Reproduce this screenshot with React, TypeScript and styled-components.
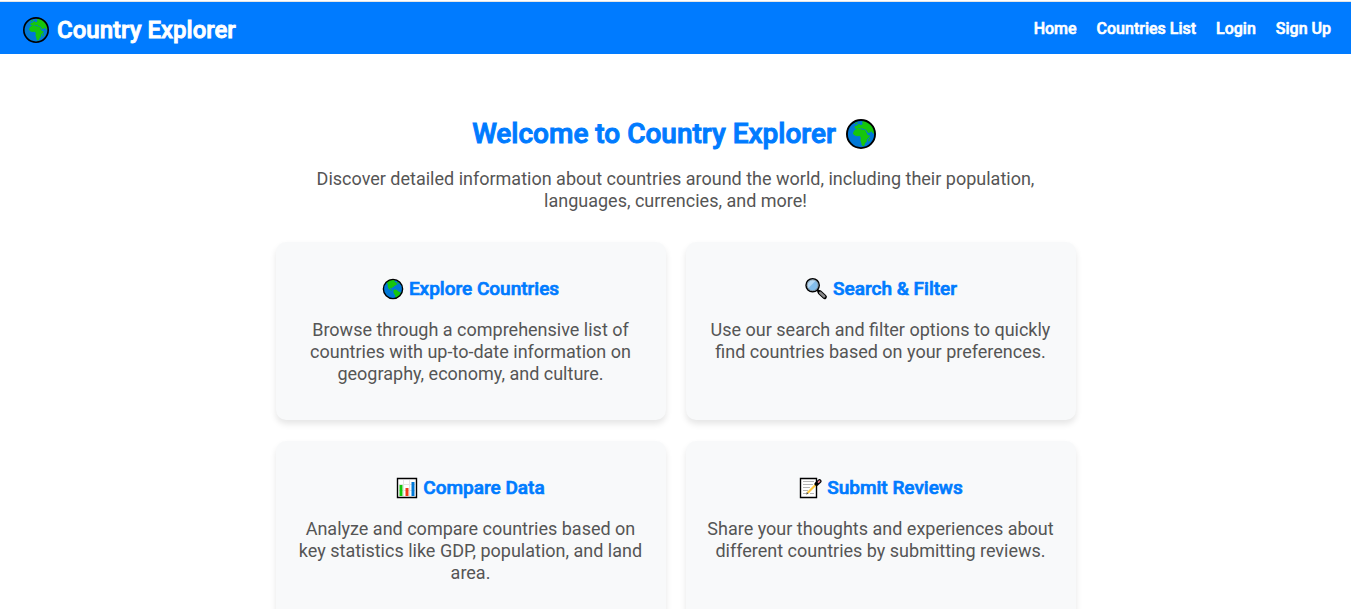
import React from "react";
import styled, { createGlobalStyle, css } from "styled-components";

const GlobalStyle = createGlobalStyle`
  *, *::before, *::after { box-sizing: border-box; }
  body {
    margin: 0;
    background: #fff;
    color: #555;
    font-family: Roboto, "Liberation Sans", sans-serif;
  }
  h1, h2, h3, p, ul { margin: 0; padding: 0; }
`;

const strong = css`
  font-weight: 500;
  -webkit-text-stroke: 0.035em currentColor;
`;

const Page = styled.div`
  padding: 1px 1px 0 0;
`;

const Header = styled.header`
  display: flex;
  align-items: center;
  justify-content: space-between;
  min-height: 53px;
  padding: 2px 20px 0;
  border-top: 1px solid #e4e4e4;
  background: #007bff;
  color: #fff;
`;

const Brand = styled.h1`
  display: flex;
  align-items: center;
  gap: 8px;
  padding: 2px 0 0 3px;
  font-size: 24px;
  line-height: 28px;
  ${strong}
`;

const NavList = styled.ul`
  display: flex;
  gap: 20px;
  list-style: none;
`;

const NavLink = styled.a`
  color: #fff;
  font-size: 16px;
  line-height: 20px;
  text-decoration: none;
  ${strong}
`;

const Main = styled.main`
  max-width: 840px;
  margin: 0 auto;
  padding: 63px 20px 40px;
  text-align: center;
`;

const Heading = styled.h2`
  display: flex;
  align-items: center;
  justify-content: center;
  gap: 10px;
  padding-right: 3px;
  color: #007bff;
  font-size: 28px;
  line-height: 34px;
  ${strong}
`;

const Text = styled.p`
  font-size: 18px;
  line-height: 22px;
`;

const Intro = styled(Text)`
  margin: 17px 0 30px;
  padding: 0 20px;
`;

const Grid = styled.section`
  display: grid;
  grid-template-columns: repeat(auto-fit, minmax(300px, 1fr));
  gap: 21px 20px;
`;

const Card = styled.article`
  padding: 35px 20px;
  border-radius: 10px;
  background: #f8f9fa;
  box-shadow: 0 4px 6px rgba(0, 0, 0, 0.1);
`;

const CardTitle = styled.h3`
  display: flex;
  align-items: center;
  justify-content: center;
  gap: 5px;
  margin-bottom: 18px;
  color: #007bff;
  font-size: 19px;
  line-height: 24px;
  ${strong}
`;

const Icon = styled.svg<{ $size: number }>`
  flex: none;
  width: ${(p) => p.$size}px;
  height: ${(p) => p.$size}px;
`;

const Africa = ({ size }: { size: number }) => (
  <Icon $size={size} viewBox="0 0 32 32" aria-hidden="true">
    <circle cx="16" cy="16" r="15" fill="#0078d7" />
    <g fill="#16c60c">
      <path d="M8 13.500 9.500 11.500l3-1.200 3 .2 1.500 1 3.500.3 1.300 2.700 1.500 2.700 2.200.2-.5 1.800-2.700 2.700-.2 2.300-1.500 1.500-1 2.500-1.600.8-1.200-1-.7-3.300-.8-2 .5-2.500-1-2-3 .2-2.500-.7-2-2z" />
      <path d="M9 9.500 9.500 7.500l2-.3L13 5.500l1.500-.2.7 1.200 2-.5.500-1.500-.7-1.500 2-1 4.500 1.300 4.500 4.200 2 5-.5 3.500-1.500-1.500-1-1.500-1.500 1.500-2 .5-1.500-2.500-1.500-1.500-2 0-1-1.200-1.500.2-2-.5-2 1.500z" />
      <path d="m25 20 .8.5-.8 3-1 .5-.2-2z" />
      <path d="m9 5 3-1.700.5 1.200-2.500 1.200z" />
    </g>
    <circle cx="16" cy="16" r="15" fill="none" stroke="#000" strokeWidth="2" />
  </Icon>
);

const Americas = () => (
  <Icon $size={22} viewBox="0 0 32 32" aria-hidden="true">
    <circle cx="16" cy="16" r="14" fill="#0078d7" />
    <g fill="#16c60c">
      <path d="m7 6 4-3 5-1 3 1-1 2.500 2 .5 2.500 3-2.500 1.500-2 1-1.500 2-2 .3-.5 1.700-1-1-1.500.5.500 1.500 2 .5 1 1-2 0-3-2-1.500-3L8.500 9.500z" />
      <path d="m17 17.500 2.500-1 3 1.500 1.500 1.500 3.500 1.500-.5 2.500-2 1.500-1.500 2.500-3 2-1 .5-.3-4.500-2.200-3.500-.5-3z" />
      <path d="m22.500 5 3.500 2.500-2 .5-2.500-1.500z" />
    </g>
    <circle cx="16" cy="16" r="14" fill="none" stroke="#000" strokeWidth="2" />
  </Icon>
);

const Magnifier = () => (
  <Icon $size={24} viewBox="0 0 32 32" aria-hidden="true">
    <path d="m21 20.500 6.500 6" stroke="#000" strokeWidth="6" strokeLinecap="round" />
    <path d="m17 16.500 4 4" stroke="#000" strokeWidth="3" />
    <path d="m21.500 21 5.500 5" stroke="#8a8a8a" strokeWidth="3.200" strokeLinecap="round" />
    <circle cx="11.500" cy="11" r="8.800" fill="#83bdeb" stroke="#000" strokeWidth="2" />
    <path d="M5.500 15A7.300 7.300 0 0 1 15.500 5z" fill="#b5d9f5" />
    <circle cx="11.500" cy="11" r="7.300" fill="none" stroke="#868686" strokeWidth="1" />
  </Icon>
);

const BarChart = () => (
  <Icon $size={22} viewBox="0 0 22 22" aria-hidden="true">
    <path d="M1.500 1.500h19v19h-19z" fill="#fff" stroke="#000" strokeWidth="1.400" />
    <path d="M3 7.500h16M3 13.500h16M7.500 3v16M13.500 3v16" stroke="#e3e3e3" strokeWidth="1" />
    <path d="M3.500 8h3v11h-3z" fill="#16c60c" />
    <path d="M9.500 11h3v8h-3z" fill="#f03a17" />
    <path d="M15.500 5h3v14h-3z" fill="#0078d7" />
  </Icon>
);

const Memo = () => (
  <Icon $size={24} viewBox="0 0 24 24" aria-hidden="true">
    <path d="M2.500 2.500h16v19h-16z" fill="#fff" stroke="#000" strokeWidth="1.400" />
    <path d="M5 5.500h11M5 8.500h10M5 11.500h7M5 14.500h5M5 17.500h3M12 17.500h4" stroke="#b5b5b5" strokeWidth="1" />
    <path d="m9.500 17 9.500-9.500" stroke="#ffc83d" strokeWidth="2.200" />
    <path d="m18.500 8 3-2.800" stroke="#000" strokeWidth="4" strokeLinecap="round" />
    <path d="m20.500 6.200 1-1" stroke="#e6808a" strokeWidth="1.800" strokeLinecap="round" />
    <path d="m8 18.500.8-2.500 1.700 1.700z" fill="#444" />
  </Icon>
);

const links = ["Home", "Countries List", "Login", "Sign Up"];

const features = [
  {
    icon: <Americas />,
    title: "Explore Countries",
    text: "Browse through a comprehensive list of countries with up-to-date information on geography, economy, and culture.",
  },
  {
    icon: <Magnifier />,
    title: "Search & Filter",
    text: "Use our search and filter options to quickly find countries based on your preferences.",
  },
  {
    icon: <BarChart />,
    title: "Compare Data",
    text: "Analyze and compare countries based on key statistics like GDP, population, and land area.",
  },
  {
    icon: <Memo />,
    title: "Submit Reviews",
    text: "Share your thoughts and experiences about different countries by submitting reviews.",
  },
];

export default function App() {
  return (
    <Page>
      <GlobalStyle />
      <Header>
        <Brand>
          <Africa size={26} />
          Country Explorer
        </Brand>
        <nav aria-label="Main">
          <NavList>
            {links.map((label) => (
              <li key={label}>
                <NavLink href="#">{label}</NavLink>
              </li>
            ))}
          </NavList>
        </nav>
      </Header>
      <Main>
        <Heading>
          Welcome to Country Explorer
          <Africa size={30} />
        </Heading>
        <Intro>
          Discover detailed information about countries around the world, including their population,
          languages, currencies, and more!
        </Intro>
        <Grid>
          {features.map((f) => (
            <Card key={f.title}>
              <CardTitle>
                {f.icon}
                {f.title}
              </CardTitle>
              <Text>{f.text}</Text>
            </Card>
          ))}
        </Grid>
      </Main>
    </Page>
  );
}
